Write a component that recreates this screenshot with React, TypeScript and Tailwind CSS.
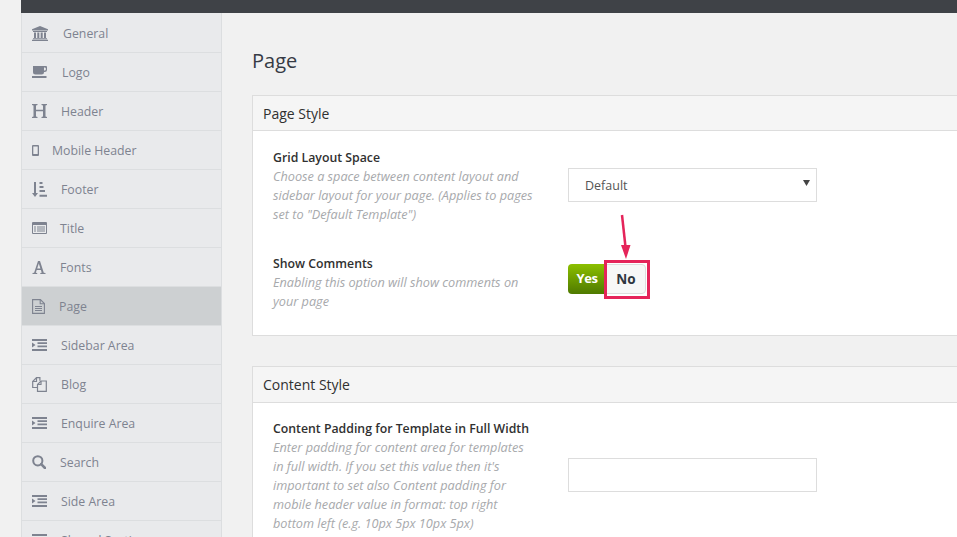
const IconBank = () => (
  <svg viewBox="0 0 16 15" className="w-[16px] h-[15px]" fill="currentColor">
    <path d="M8 0l8 3.200V4.500H0V3.200zM1 5h14v1H1zM2 6.500h2v5.500H2zM5.300 6.500h2v5.500h-2zM8.700 6.500h2v5.500h-2zM12 6.500h2v5.500h-2zM1 12.300h14v1H1zM0 13.700h16V15H0z" />
  </svg>
);

const IconCoffee = () => (
  <svg viewBox="0 0 15 12" className="w-[15px] h-[12px]" fill="currentColor">
    <path
      fillRule="evenodd"
      d="M1 0h13a1 1 0 0 1 1 1v2.500a2.500 2.500 0 0 1-2.500 2.500H12a2.500 2.500 0 0 1-2.500 2.500h-6A2.500 2.500 0 0 1 1 6zm11 1.500V4.500h.7a1.200 1.200 0 0 0 1.200-1.200v-.6a1.200 1.200 0 0 0-1.200-1.200z"
    />
    <path d="M0 10h14.500v2H0z" />
  </svg>
);

const IconH = () => (
  <svg viewBox="0 0 15 14" className="w-[15px] h-[14px]" fill="currentColor">
    <path d="M0 0h5.500v1L4 1.400v4.400h7V1.400L9.500 1V0H15v1l-1.500.4v11.200l1.500.4v1H9.500v-1l1.500-.4V7.200H4v5.400l1.500.4v1H0v-1l1.500-.4V1.400L0 1z" />
  </svg>
);

const IconMobile = () => (
  <svg viewBox="0 0 7 11" className="w-[7px] h-[11px]" fill="currentColor">
    <path
      fillRule="evenodd"
      d="M1 0h5a1 1 0 0 1 1 1v9a1 1 0 0 1-1 1H1a1 1 0 0 1-1-1V1a1 1 0 0 1 1-1zm.300 1.500v7.500h4.400V1.500z"
    />
  </svg>
);

const IconSort = () => (
  <svg viewBox="0 0 15 15" className="w-[15px] h-[15px]" fill="currentColor">
    <path d="M2 0h2v11h2l-3 4-3-4h2zM7.500 0h3v2h-3zM7.500 4h4v2h-4zM7.500 8h5.500v2H7.500zM7.500 12.700H15v2H7.500z" />
  </svg>
);

const IconList = () => (
  <svg viewBox="0 0 15 12" className="w-[15px] h-[12px]" fill="currentColor">
    <path
      fillRule="evenodd"
      d="M1 0h13a1 1 0 0 1 1 1v10a1 1 0 0 1-1 1H1a1 1 0 0 1-1-1V1a1 1 0 0 1 1-1zm0 3v8h13V3zm1 1.500h2v1H2zm3 0h8v1H5zM2 6.500h2v1H2zm3 0h8v1H5zM2 8.500h2v1H2zm3 0h8v1H5z"
    />
  </svg>
);

const IconFontA = () => (
  <svg viewBox="0 0 14 13" className="w-[14px] h-[13px]" fill="currentColor">
    <path
      fillRule="evenodd"
      d="M6 0h2l3.800 11.800 1.700.3V13H8.300v-.9l1.400-.3-.8-2.800H4.700l-.9 2.800 1.400.3V13H.5v-.9l1.600-.3zM6.800 2.600L5.200 7.600h3.200z"
    />
  </svg>
);

const IconPage = () => (
  <svg viewBox="0 0 13 15" className="w-[13px] h-[15px]" fill="none" stroke="currentColor" strokeWidth="1.100">
    <path d="M.6.600h7.800l4 4v9.800H.6z" />
    <path d="M8.200.600v4.200h4.200M3 7.500h7M3 9.500h7M3 11.500h7" />
  </svg>
);

const IconIndent = () => (
  <svg viewBox="0 0 15 12" className="w-[15px] h-[12px]" fill="currentColor">
    <path d="M0 0h15v2H0zM5.500 3.300H15v1.700H5.500zM5.500 6.500H15v1.700H5.500zM0 10h15v2H0zM0 3.500L3.500 6 0 8.500z" />
  </svg>
);

const IconFiles = () => (
  <svg viewBox="0 0 15 15" className="w-[15px] h-[15px]" fill="none" stroke="currentColor" strokeWidth="1.200">
    <path d="M5.500 10.500H.7V4.500L4.500.7h3.400v3" />
    <path d="M4.500.7v3.800H.7" />
    <path d="M5.500 14.300V7.500L9 4h5.300v10.300z" />
    <path d="M9 4v3.500H5.500" />
  </svg>
);

const IconSearch = () => (
  <svg viewBox="0 0 14 14" className="w-[14px] h-[14px]" fill="none" stroke="currentColor">
    <circle cx="5.800" cy="5.800" r="4.600" strokeWidth="2" />
    <path d="M9.200 9.200l3.800 3.800" strokeWidth="2.600" strokeLinecap="round" />
  </svg>
);

const items = [
  { label: "General", icon: <IconBank />, slot: "w-[31px]" },
  { label: "Logo", icon: <IconCoffee />, slot: "w-[30px]" },
  { label: "Header", icon: <IconH />, slot: "w-[29px]" },
  { label: "Mobile Header", icon: <IconMobile />, slot: "w-[20px]" },
  { label: "Footer", icon: <IconSort />, slot: "w-[29px]" },
  { label: "Title", icon: <IconList />, slot: "w-[28px]" },
  { label: "Fonts", icon: <IconFontA />, slot: "w-[28px]" },
  { label: "Page", icon: <IconPage />, slot: "w-[27px]", active: true },
  { label: "Sidebar Area", icon: <IconIndent />, slot: "w-[29px]" },
  { label: "Blog", icon: <IconFiles />, slot: "w-[29px]" },
  { label: "Enquire Area", icon: <IconIndent />, slot: "w-[29px]" },
  { label: "Search", icon: <IconSearch />, slot: "w-[28px]" },
  { label: "Side Area", icon: <IconIndent />, slot: "w-[29px]" },
  { label: "Shared Section", icon: <IconIndent />, slot: "w-[29px]" },
];

const Sidebar = () => (
  <aside className="w-[201px] shrink-0 border-x border-[#dcdee0] bg-[#e9eaec] pt-px">
    {items.map((item) => (
      <div
        key={item.label}
        className={`h-[39px] flex items-center pl-[10px] border-b border-[#dcdee0] text-[12.300px] text-[#7e8390] ${
          item.active ? "bg-[#cdd0d2]" : ""
        }`}
      >
        <span className={`${item.slot} shrink-0 flex items-center`}>{item.icon}</span>
        <span className="pt-[2px]">{item.label}</span>
      </div>
    ))}
  </aside>
);

const Field = ({
  title,
  lines,
  children,
}: {
  title: string;
  lines: string[];
  children: React.ReactNode;
}) => (
  <div className="flex">
    <div className="w-[295px] shrink-0">
      <p className="text-[12.300px] leading-[19px] font-semibold text-[#303030]">{title}</p>
      {lines.map((line) => (
        <p key={line} className="text-[12.700px] leading-[19px] italic text-[#a7a9ac] whitespace-nowrap">
          {line}
        </p>
      ))}
    </div>
    {children}
  </div>
);

const Toggle = () => (
  <div className="relative flex h-[30px] w-[78px] mt-[10px]">
    <div className="w-[38px] rounded-l-[4px] bg-gradient-to-b from-[#8cc000] to-[#4f7a00] flex items-center justify-center text-[13px] font-bold tracking-[-0.4px] text-white">
      Yes
    </div>
    <div className="flex-1 rounded-r-[4px] bg-[#f7f7f7] border border-[#dddddd] flex items-center justify-center text-[13.500px] font-bold text-[#2f3640]">
      No
    </div>
    {/* annotation drawn over the screenshot */}
    <div className="absolute left-[36px] -top-[4px] w-[46px] h-[39px] border-[3px] border-[#e5245a]" />
    <svg className="absolute left-[46px] -top-[52px]" width="20" height="50" viewBox="0 0 20 50">
      <path d="M8 3l3.500 32" stroke="#e5245a" strokeWidth="2.500" fill="none" />
      <path d="M7 33h9.500L12 47z" fill="#e5245a" />
    </svg>
  </div>
);

export default function App() {
  return (
    <div className="h-[537px] w-[957px] overflow-hidden bg-[#f1f1f1] pl-[21px] font-['Open_Sans',sans-serif]">
      <div className="h-[13px] bg-[#3f4247]" />
      <div className="flex">
        <Sidebar />
        <main className="flex-1 pl-[30px] pt-[30px]">
          <h1 className="text-[20px] leading-[36px] font-medium text-[#363b45]">Page</h1>
          <section className="mt-[16px] w-[760px] border border-[#dddddd] bg-white">
            <h2 className="h-[35px] flex items-center px-[10px] bg-[#f5f5f5] border-b border-[#dddddd] text-[14px] font-normal text-[#303030]">
              Page Style
            </h2>
            <div className="pl-[20px] pt-[17px] pb-[24px]">
              <Field
                title="Grid Layout Space"
                lines={[
                  "Choose a space between content layout and",
                  "sidebar layout for your page. (Applies to pages",
                  'set to "Default Template")',
                ]}
              >
                <div className="mt-[20px] h-[34px] w-[249px] border border-[#dddddd] bg-white flex items-center justify-between pl-[16px] pr-[6px] text-[12.500px] text-[#555555]">
                  <span className="pt-[3px]">Default</span>
                  <svg width="7" height="6" viewBox="0 0 7 6" className="-mt-[4px]">
                    <path d="M0 0h7L3.500 6z" fill="#444444" />
                  </svg>
                </div>
              </Field>
              <div className="mt-[30px]">
                <Field
                  title="Show Comments"
                  lines={["Enabling this option will show comments on", "your page"]}
                >
                  <Toggle />
                </Field>
              </div>
            </div>
          </section>
          <section className="mt-[30px] w-[760px] border border-[#dddddd] bg-white">
            <h2 className="h-[36px] flex items-center px-[10px] bg-[#f5f5f5] border-b border-[#dddddd] text-[14px] font-normal text-[#303030]">
              Content Style
            </h2>
            <div className="pl-[20px] pt-[16px] pb-[16px]">
              <Field
                title="Content Padding for Template in Full Width"
                lines={[
                  "Enter padding for content area for templates",
                  "in full width. If you set this value then it's",
                  "important to set also Content padding for",
                  "mobile header value in format: top right",
                  "bottom left (e.g. 10px 5px 10px 5px)",
                ]}
              >
                <div className="mt-[39px] h-[34px] w-[249px] border border-[#dddddd] bg-white" />
              </Field>
            </div>
          </section>
        </main>
      </div>
    </div>
  );
}
